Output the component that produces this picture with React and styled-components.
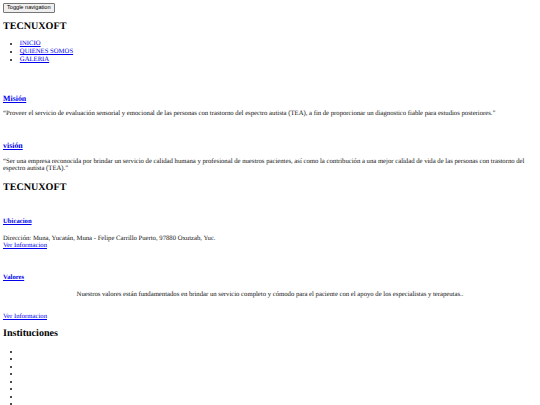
import styled, { createGlobalStyle } from 'styled-components'

const GlobalStyle = createGlobalStyle`
    body {
        margin: 3px;
        font-family: "Liberation Serif", "Times New Roman", serif;
        font-size: 6.7px;
        line-height: 7.7px;
        color: #111;
        background: #fff;
        text-rendering: geometricPrecision;
    }
    h2, h3, h4, p, ul {
        margin: 0;
    }
    a {
        color: #0000ee;
        text-decoration: underline;
    }
`

const ToggleButton = styled.button`
    display: block;
    height: 9.5px;
    padding: 0 3px;
    font-family: "Liberation Sans", Arial, sans-serif;
    font-size: 5.6px;
    line-height: 7px;
    background: #efefef;
    border: 1px solid #767676;
    border-radius: 1px;
    color: #000;
`

const Brand = styled.h2`
    font-size: 10.1px;
    line-height: 11.6px;
    color: #000;
    margin-top: ${props => props.$top}px;
`

const NavList = styled.ul`
    margin-top: 8px;
    padding-left: 16.8px;
`

const Title = styled.h3`
    font-size: ${props => props.$small ? '6.7px' : '7.9px'};
    line-height: ${props => props.$small ? '7.7px' : '9.1px'};
    margin-top: ${props => props.$top}px;
`

const Text = styled.p`
    margin-top: ${props => props.$top}px;
    text-align: ${props => props.$center ? 'center' : 'left'};
`

const BulletList = styled.ul`
    margin-top: 8.4px;
    padding-left: 16.8px;
    li {
        height: 7.5px;
    }
`

export default function App() {
    return (
        <>
            <GlobalStyle />
            <ToggleButton>Toggle navigation</ToggleButton>
            <Brand $top={8.4}>TECNUXOFT</Brand>
            <NavList>
                <li><a href="#">INICIO</a></li>
                <li><a href="#">QUIENES SOMOS</a></li>
                <li><a href="#">GALERIA</a></li>
            </NavList>

            <Title $top={30}><a href="#">Misión</a></Title>
            <Text $top={7.5}>“Proveer el servicio de evaluación sensorial y emocional de las personas con trastorno del espectro autista (TEA), a fin de proporcionar un diagnostico fiable para estudios posteriores.”</Text>

            <Title $top={23.2}><a href="#">visión</a></Title>
            <Text $top={7.5}>“Ser una empresa reconocida por brindar un servicio de calidad humana y profesional de nuestros pacientes, así como la contribución a una mejor calidad de vida de las personas con trastorno del espectro autista (TEA).”</Text>

            <Brand $top={8.7}>TECNUXOFT</Brand>

            <Title $small $top={24.3}><a href="#">Ubicacion</a></Title>
            <Text $top={9.3}>
                Dirección: Muna, Yucatán, Muna - Felipe Carrillo Puerto, 97880 Oxutzab, Yuc.<br />
                <a href="#">Ver Informacion</a>
            </Text>

            <Title $small $top={23.6}><a href="#">Valores</a></Title>
            <Text $center $top={9.3}>Nuestros valores están fundamentados en brindar un servicio completo y cómodo para el paciente con el apoyo de los especialistas y terapeutas..</Text>
            <Text $top={14.3}><a href="#">Ver Informacion</a></Text>

            <Brand $top={7.4}>Instituciones</Brand>
            <BulletList>
                {Array.from({ length: 9 }).map((_, i) => <li key={i}></li>)}
            </BulletList>
        </>
    )
}
